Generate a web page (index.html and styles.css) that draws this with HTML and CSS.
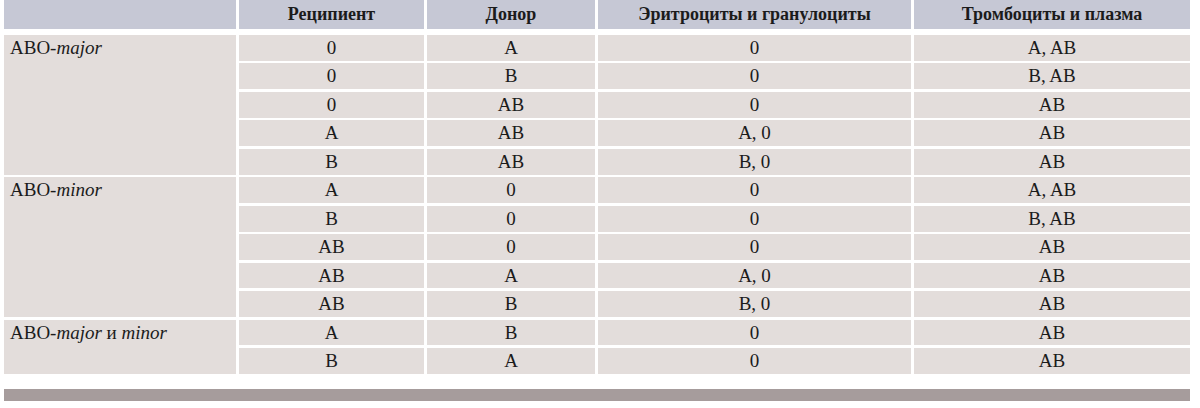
FILE: index.html
```html
<!DOCTYPE html>
<html lang="ru">
<head>
<meta charset="utf-8">
<link rel="stylesheet" href="styles.css">
</head>
<body>
<div class="page">
  <div class="grid head">
    <div class="hc"></div>
    <div class="hc">Реципиент</div>
    <div class="hc">Донор</div>
    <div class="hc">Эритроциты и гранулоциты</div>
    <div class="hc">Тромбоциты и плазма</div>
  </div>
  <div class="grid body">
    <div class="grp g1">ABO-<i>major</i></div>
    <div class="c">0</div><div class="c">A</div><div class="c">0</div><div class="c">A, AB</div>
    <div class="c">0</div><div class="c">B</div><div class="c">0</div><div class="c">B, AB</div>
    <div class="c">0</div><div class="c">AB</div><div class="c">0</div><div class="c">AB</div>
    <div class="c">A</div><div class="c">AB</div><div class="c">A, 0</div><div class="c">AB</div>
    <div class="c">B</div><div class="c">AB</div><div class="c">B, 0</div><div class="c">AB</div>

    <div class="grp g2">ABO-<i>minor</i></div>
    <div class="c">A</div><div class="c">0</div><div class="c">0</div><div class="c">A, AB</div>
    <div class="c">B</div><div class="c">0</div><div class="c">0</div><div class="c">B, AB</div>
    <div class="c">AB</div><div class="c">0</div><div class="c">0</div><div class="c">AB</div>
    <div class="c">AB</div><div class="c">A</div><div class="c">A, 0</div><div class="c">AB</div>
    <div class="c">AB</div><div class="c">B</div><div class="c">B, 0</div><div class="c">AB</div>

    <div class="grp g3">ABO-<i>major</i> и <i>minor</i></div>
    <div class="c">A</div><div class="c">B</div><div class="c">0</div><div class="c">AB</div>
    <div class="c">B</div><div class="c">A</div><div class="c">0</div><div class="c">AB</div>
  </div>
  <div class="bar"></div>
</div>
</body>
</html>
```
FILE: styles.css
```css
html, body {
  margin: 0;
  padding: 0;
  background: #ffffff;
}
.page {
  width: 1186px;
  padding: 0 0 0 4px;
  font-family: "Liberation Serif", "Times New Roman", serif;
  color: #1b1b1b;
}
.grid {
  display: grid;
  grid-template-columns: 232px 185px 168px 313px 276px;
  column-gap: 3px;
}
.head {
  height: 28px;
}
.hc {
  background: #c6c8d5;
  font-weight: bold;
  font-size: 18px;
  text-align: center;
  line-height: 29px;
}
.body {
  margin-top: 7px;
  grid-auto-rows: 25.6px;
  row-gap: 2.9px;
}
.c {
  background: #e3dddb;
  font-size: 19px;
  text-align: center;
  line-height: 25px;
}
.grp {
  grid-column: 1;
  background: #e3dddb;
  font-size: 19px;
  line-height: 25px;
  padding-left: 6px;
}
.g1 { grid-row: 1 / span 5; }
.g2 { grid-row: 6 / span 5; }
.g3 { grid-row: 11 / span 2; }
.bar {
  margin-top: 15px;
  height: 12px;
  background: #a69c9c;
}
```
